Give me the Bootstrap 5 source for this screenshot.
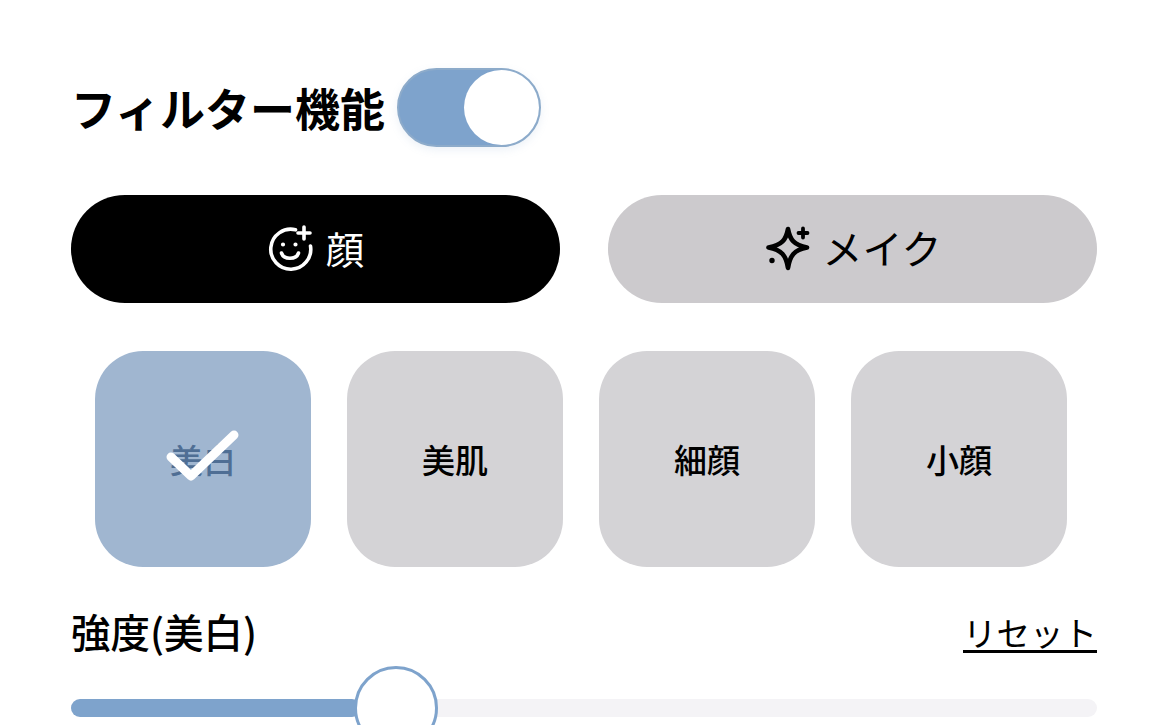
<!doctype html>
<html lang="ja">
<head>
<meta charset="utf-8">
<title>フィルター機能</title>
<link href="https://cdn.jsdelivr.net/npm/bootstrap@5.3.0/dist/css/bootstrap.min.css" rel="stylesheet">
<style>
html,body{height:725px;overflow:hidden;background:#fff}
body{font-family:"Noto Sans CJK JP","Noto Sans",sans-serif;color:#000}
.screen{padding:68px 72px 0 71px;height:725px}
.head-row{height:79px;gap:12px;margin-bottom:48px}
.head-title{font-size:45px;font-weight:700;line-height:1;margin:0 0 1px}
.toggle{width:144px;height:79px;border-radius:40px;background:#7ea3cc;border:2px solid #8dabca;box-shadow:0 3px 8px rgba(126,163,204,.15)}
.toggle-knob{width:75px;height:75px;border-radius:50%;background:#fff}
.seg-row{gap:48px;margin-bottom:48px}
.seg-btn{flex:1 1 0;height:108px;border-radius:54px;border:0;font-size:38px;line-height:1;gap:11px;padding:0}
.seg-on{background:#000;color:#fff}
.seg-off{background:#cccacd;color:#000;gap:8px}
.seg-off svg{margin-left:3px}
.seg-text{padding-bottom:3px}
.seg-text-kana{font-size:40px;padding-bottom:4px}
.tile-row{gap:36px;padding-left:24px;margin-bottom:44px}
.tile{width:216px;height:216px;border-radius:48px;background:#d4d3d6;font-size:33px;font-weight:500;line-height:1}
.tile-on{background:#a0b6d0;color:#4f6e94}
.tile-check{position:absolute;left:70px;top:78px;width:76px;height:56px}
.label-row{height:46px;margin-bottom:16px}
.label-main{font-size:39.500px;font-weight:500;line-height:46px;margin-top:-3px}
.label-reset{font-size:33.500px;line-height:36px;padding-top:4px;color:#000;text-decoration:none;border-bottom:3px solid #000;margin-top:-1px}
.slider{height:18px;border-radius:9px;background:#f4f3f6;margin-top:42px}
.slider-fill{width:290px;height:18px;border-radius:9px;background:#7ea3cc}
.slider-thumb{position:absolute;left:283px;top:-33px;width:84px;height:84px;border-radius:50%;background:#fff;border:3px solid #7ea3cc}
</style>
</head>
<body>
<div class="screen">
  <div class="d-flex align-items-center head-row">
    <h1 class="head-title">フィルター機能</h1>
    <div class="toggle d-flex justify-content-end align-items-center"><span class="toggle-knob"></span></div>
  </div>
  <div class="d-flex seg-row">
    <button class="seg-btn seg-on d-flex align-items-center justify-content-center" type="button">
      <svg width="48" height="48" viewBox="0 0 48 48" fill="none" stroke="#fff" stroke-width="3.6" stroke-linecap="round" aria-hidden="true">
        <path d="M28.500 4.800A20 20 0 1 0 43.500 21"/>
        <path d="M37 2v12M31 8h12"/>
        <path d="M14.500 28c2 7 15 7 17 0"/>
        <circle cx="16" cy="19.500" r="1.300" fill="#fff" stroke-width="1.600"/>
        <circle cx="28.500" cy="19.500" r="1.300" fill="#fff" stroke-width="1.600"/>
      </svg>
      <span class="seg-text">顔</span>
    </button>
    <button class="seg-btn seg-off d-flex align-items-center justify-content-center" type="button">
      <svg width="48" height="48" viewBox="0 0 48 48" fill="none" stroke="#000" stroke-width="4.600" stroke-linecap="round" stroke-linejoin="round" aria-hidden="true">
        <path d="M22 4c2 11 6 16 19 18.500c-13 2.500-17 8-19 20.500c-2-12.500-6-18-19.500-20.500c13.500-2.500 17.500-7.500 19.500-18.500z"/>
        <path d="M37 3.500v9M32.500 8h9" stroke-width="3.800"/>
        <circle cx="6" cy="35.500" r="1.800" fill="#000" stroke-width="1.800"/>
      </svg>
      <span class="seg-text-kana">メイク</span>
    </button>
  </div>
  <div class="d-flex tile-row">
    <div class="tile tile-on position-relative d-flex align-items-center justify-content-center">
      <span>美白</span>
      <svg class="tile-check" viewBox="0 0 76 56" fill="none" stroke="#fff" stroke-width="9" stroke-linecap="round" stroke-linejoin="round" aria-hidden="true"><path d="M6 28L26 47L69 6"/></svg>
    </div>
    <div class="tile d-flex align-items-center justify-content-center">美肌</div>
    <div class="tile d-flex align-items-center justify-content-center">細顔</div>
    <div class="tile d-flex align-items-center justify-content-center">小顔</div>
  </div>
  <div class="d-flex justify-content-between align-items-start label-row">
    <span class="label-main">強度(美白)</span>
    <a href="#" class="label-reset">リセット</a>
  </div>
  <div class="slider position-relative">
    <div class="slider-fill"></div>
    <div class="slider-thumb"></div>
  </div>
</div>
<script src="https://cdn.jsdelivr.net/npm/bootstrap@5.3.0/dist/js/bootstrap.bundle.min.js"></script>
</body>
</html>
